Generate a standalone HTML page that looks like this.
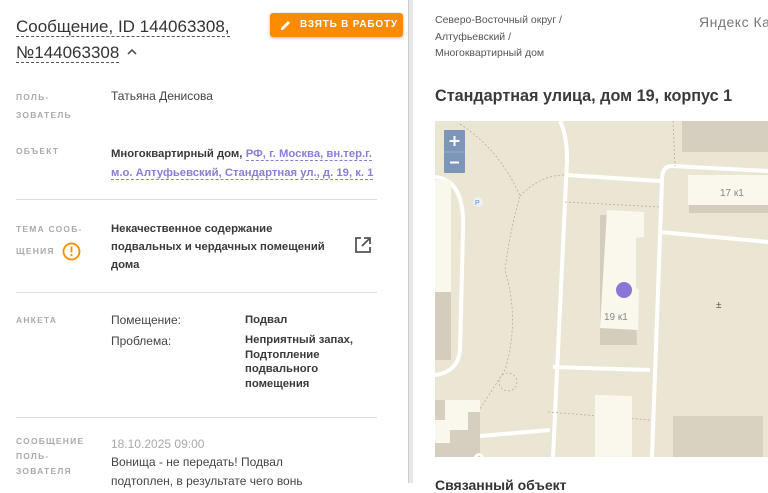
<!DOCTYPE html>
<html><head><meta charset="utf-8"><style>
*{margin:0;padding:0;box-sizing:border-box}
body{width:768px;height:483px;overflow:hidden;background:#fff;font-family:"Liberation Sans","Noto Sans CJK SC",sans-serif;color:#333;position:relative}
.a{position:absolute;white-space:nowrap}
.t{font-size:17px;color:#333;border-bottom:1px dashed #555;line-height:19px}
.lab{font-size:8.5px;letter-spacing:1.2px;color:#aaa;font-weight:bold;line-height:18px}
.v{font-size:12px;line-height:18px;color:#444}
.b{font-weight:bold;color:#3a3a3a;font-size:11.3px}
.hr{position:absolute;left:16px;width:361px;height:1px;background:#ddd}
.lnk{color:#8a7dd8;border-bottom:1px dashed #8a7dd8}
</style></head><body>
<div class="a t" style="left:16px;top:17px">Сообщение, ID 144063308,</div>
<div class="a t" style="left:16px;top:43px">№144063308</div>
<svg class="a" style="left:126px;top:47px" width="12" height="10"><path d="M2 7 L6 3 L10 7" stroke="#555" stroke-width="1.6" fill="none"/></svg>
<div class="a" style="left:270px;top:13px;width:133px;height:24px;background:#fb8c00;border-radius:3px;box-shadow:0 1px 3px rgba(0,0,0,.3);color:#fff;font-size:10px;font-weight:bold;letter-spacing:.8px;line-height:24px;padding-left:30px">ВЗЯТЬ В РАБОТУ</div>
<svg class="a" style="left:280px;top:19px" width="12" height="12"><path d="M1 11 L1 9 L8 2 L10 4 L3 11 Z" fill="#fff"/></svg>

<div class="a lab" style="left:16px;top:88px">ПОЛЬ-<br>ЗОВАТЕЛЬ</div>
<div class="a v" style="left:111px;top:87px">Татьяна Денисова</div>

<div class="a lab" style="left:16px;top:142px">ОБЪЕКТ</div>
<div class="a v" style="left:111px;top:144px"><span class="b">Многоквартирный дом,</span> <span class="lnk b" style="color:#8a7dd8">РФ, г. Москва, вн.тер.г.</span><br><span class="lnk b" style="color:#8a7dd8">м.о. Алтуфьевский, Стандартная ул., д. 19, к. 1</span></div>
<div class="hr" style="top:199px"></div>

<div class="a lab" style="left:16px;top:220px">ТЕМА СООБ-<br><span style="line-height:26px">ЩЕНИЯ</span></div>
<svg class="a" style="left:62px;top:242px" width="19" height="19"><circle cx="9.5" cy="9.5" r="8" stroke="#fb8c00" stroke-width="1.8" fill="none"/><rect x="8.6" y="4.5" width="1.8" height="6" fill="#fb8c00"/><rect x="8.6" y="12" width="1.8" height="2" fill="#fb8c00"/></svg>
<div class="a v b" style="left:111px;top:220px">Некачественное содержание<br>подвальных и чердачных помещений<br>дома</div>
<svg class="a" style="left:354px;top:236px" width="18" height="18"><path d="M7 2 H2 V16 H16 V11" stroke="#555" stroke-width="1.8" fill="none"/><path d="M10 2 H16 V8 M16 2 L8 10" stroke="#555" stroke-width="1.8" fill="none"/></svg>
<div class="hr" style="top:292px"></div>

<div class="a lab" style="left:16px;top:311px">АНКЕТА</div>
<div class="a v" style="left:111px;top:311px">Помещение:</div>
<div class="a v" style="left:111px;top:332px">Проблема:</div>
<div class="a v b" style="left:245px;top:311px">Подвал</div>
<div class="a v b" style="left:245px;top:333px;line-height:14.5px">Неприятный запах,<br>Подтопление<br>подвального<br>помещения</div>
<div class="hr" style="top:417px"></div>

<div class="a lab" style="left:16px;top:434px;line-height:15px">СООБЩЕНИЕ<br>ПОЛЬ-<br>ЗОВАТЕЛЯ</div>
<div class="a v" style="left:111px;top:435px;color:#aaa">18.10.2025 09:00</div>
<div class="a v" style="left:111px;top:453px">Вонища - не передать! Подвал</div>
<div class="a v" style="left:111px;top:472px">подтоплен, в результате чего вонь</div>

<div class="a" style="left:408px;top:0;width:5px;height:483px;background:#e8e8e8;border-left:1px solid #ccc"></div>

<div class="a" style="left:435px;top:12px;font-size:10.5px;line-height:16.5px;color:#555">Северо-Восточный округ /<br>Алтуфьевский /<br>Многоквартирный дом</div>
<div class="a" style="left:699px;top:14px;font-size:14px;color:#777;letter-spacing:.5px">Яндекс Ка</div>
<div class="a" style="left:435px;top:87px;font-size:16.2px;font-weight:bold;color:#3a3a3a">Стандартная улица, дом 19, корпус 1</div>

<svg class="a" style="left:435px;top:121px" width="333" height="336" viewBox="435 121 333 336">
<rect x="435" y="121" width="333" height="336" fill="#ebe5d3"/>
<rect x="682" y="121" width="86" height="31" fill="#d6cfbf"/>
<rect x="673" y="416" width="90" height="41" fill="#d9d2c1"/>
<g stroke="#fff" stroke-width="4" fill="none">
<path d="M560 121 Q567 135 567 160 L553 457"/>
<path d="M567 175 L660 181"/>
<path d="M768 171 L672 166 Q662 166 662 180 L652 457"/>
<path d="M660 232 L768 242"/>
<path d="M553 367 L650 370"/>
<path d="M435 177 Q465 180 463 230 L460 350 Q458 372 435 375"/>
<path d="M480 436 L550 430"/>
</g>
<g stroke="#b8b09c" stroke-width="0.8" stroke-dasharray="2 2" fill="none">
<path d="M460 124 Q500 150 520 196 Q510 230 505 270 Q520 320 505 370 L460 440"/>
<path d="M520 196 Q540 175 565 175"/>
<path d="M565 202 L660 207"/>
<path d="M548 412 L650 420"/>
<path d="M673 121 L675 166"/>
</g>
<circle cx="508" cy="382" r="9" stroke="#b8b09c" stroke-width="0.8" stroke-dasharray="2 2" fill="none"/>
<rect x="689" y="184" width="79" height="29" fill="#d4cdbd"/>
<rect x="688" y="175" width="80" height="30" fill="#faf7ed"/>
<text x="720" y="196" font-size="10" fill="#888" font-family="Liberation Sans,sans-serif">17 к1</text>
<path d="M600 215 L644 215 L644 237 L636 237 L636 318 L637 345 L600 345 Z" fill="#d4cdbd"/>
<path d="M607 210 L644 212 L644 237 L636 238 L636 288 L639 290 L638 330 L600 328 Z" fill="#faf7ed"/>
<text x="604" y="320" font-size="10" fill="#888" font-family="Liberation Sans,sans-serif">19 к1</text>
<circle cx="624" cy="290" r="8" fill="#8a76d6"/>
<rect x="435" y="180" width="16" height="180" fill="#d4cdbd"/>
<rect x="435" y="180" width="16" height="112" fill="#faf7ed"/>
<path d="M595 395 L632 396 L632 457 L595 457 Z" fill="#faf7ed"/>
<path d="M435 400 L480 400 L480 457 L435 457 Z" fill="#d6cfbf"/>
<path d="M445 400 L480 400 L480 412 L468 412 L468 430 L450 430 L450 443 L435 443 L435 420 L445 420 Z" fill="#faf7ed"/>
<circle cx="478" cy="202" r="5" fill="#eef1f4"/>
<text x="475" y="205" font-size="7" fill="#4a90d9" font-family="Liberation Sans,sans-serif">P</text>
<text x="716" y="308" font-size="10" fill="#555" font-family="Liberation Sans,sans-serif">±</text>
<circle cx="479" cy="458" r="5" fill="#fff"/><circle cx="479" cy="459" r="2.5" fill="#f5822a"/>
<rect x="444" y="130" width="21" height="43" rx="1" fill="#7d95b8"/>
<line x1="444" y1="152" x2="465" y2="152" stroke="#9ab0cc" stroke-width="1"/>
<path d="M454.5 136 V146 M449.5 141 H459.5 M450 162.5 H459" stroke="#fff" stroke-width="2"/>
</svg>
<div class="a" style="left:435px;top:477px;font-size:14px;font-weight:bold;color:#333">Связанный объект</div>
</body></html>
